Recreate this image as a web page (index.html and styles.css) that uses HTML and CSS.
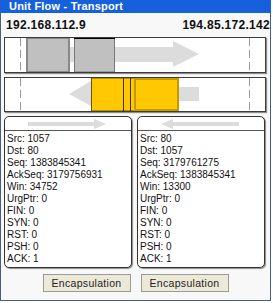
FILE: index.html
```html
<!DOCTYPE html>
<html lang="en">
<head>
    <meta charset="UTF-8">
    <title>Unit Flow - Transport</title>
    <link rel="stylesheet" href="styles.css">
</head>
<body>
    <div class="window">
        <div class="titlebar">Unit Flow - Transport</div>

        <div class="hosts">
            <span>192.168.112.9</span>
            <span>194.85.172.142</span>
        </div>

        <!-- outgoing segments -->
        <div class="lane">
            <svg width="260" height="34" viewBox="0 0 260 34">
                <line class="mark" x1="15.5" y1="0" x2="15.5" y2="34"/>
                <line class="mark" x1="244.5" y1="0" x2="244.5" y2="34"/>
                <polygon class="flow" points="64,9 168,9 168,3 194,16 168,29 168,24 64,24"/>
                <rect x="22" y="0" width="42" height="34" fill="#c0c0c0" stroke="#888" stroke-width="2"/>
                <rect x="69.5" y="0" width="40" height="34" fill="#c0c0c0" stroke="#777" stroke-width="1"/>
                <line x1="69" y1="0.5" x2="110" y2="0.5" stroke="#000"/>
            </svg>
        </div>

        <!-- incoming segments -->
        <div class="lane lane-in">
            <svg width="260" height="33" viewBox="0 0 260 33">
                <line class="mark" x1="15.5" y1="0" x2="15.5" y2="33"/>
                <line class="mark" x1="244.5" y1="0" x2="244.5" y2="33"/>
                <polygon class="flow" points="194,9 86,9 86,3 64,16 86,28 86,23 194,23"/>
                <rect x="86.5" y="0" width="43" height="33" fill="#ffc800" stroke="#6b5200" stroke-width="1"/>
                <line x1="118.5" y1="0" x2="118.5" y2="33" stroke="#3a2e00"/>
                <line x1="125.5" y1="0" x2="125.5" y2="33" stroke="#3a2e00"/>
                <rect x="130" y="1" width="43" height="31" fill="#ffc800" stroke="#c49a00" stroke-width="2"/>
            </svg>
        </div>

        <div class="panels">
            <div class="panel">
                <div class="panel-head">
                    <svg width="80" height="10" viewBox="0 0 80 10">
                        <polygon class="flow" points="0,3 66,3 66,0 78,5 66,10 66,7 0,7"/>
                    </svg>
                </div>
                <ul class="fields">
                    <li>Src: 1057</li>
                    <li>Dst: 80</li>
                    <li>Seq: 1383845341</li>
                    <li>AckSeq: 3179756931</li>
                    <li>Win: 34752</li>
                    <li>UrgPtr: 0</li>
                    <li>FIN: 0</li>
                    <li>SYN: 0</li>
                    <li>RST: 0</li>
                    <li>PSH: 0</li>
                    <li>ACK: 1</li>
                </ul>
            </div>
            <div class="panel">
                <div class="panel-head">
                    <svg width="80" height="10" viewBox="0 0 80 10">
                        <polygon class="flow" points="78,3 12,3 12,0 0,5 12,10 12,7 78,7"/>
                    </svg>
                </div>
                <ul class="fields">
                    <li>Src: 80</li>
                    <li>Dst: 1057</li>
                    <li>Seq: 3179761275</li>
                    <li>AckSeq: 1383845341</li>
                    <li>Win: 13300</li>
                    <li>UrgPtr: 0</li>
                    <li>FIN: 0</li>
                    <li>SYN: 0</li>
                    <li>RST: 0</li>
                    <li>PSH: 0</li>
                    <li>ACK: 1</li>
                </ul>
            </div>
        </div>

        <div class="actions">
            <button>Encapsulation</button>
            <button>Encapsulation</button>
        </div>
    </div>
</body>
</html>
```

FILE: styles.css
```css
body {
    margin: 0;
    padding: 0;
    background-color: #fff;
    font-family: "Liberation Sans", Arial, sans-serif;
}

.window {
    width: 269px;
    height: 300px;
    border: 1px solid #4c5a86;
    border-top: none;
    background-color: #f8f8f8;
    display: flex;
    flex-direction: column;
}

.titlebar {
    height: 13px;
    margin: 0 -1px;
    padding-left: 9px;
    background-color: #1660dc;
    color: #fff;
    font-size: 11px;
    font-weight: bold;
    line-height: 13px;
    letter-spacing: 0.2px;
}

.hosts {
    display: flex;
    justify-content: space-between;
    padding: 5px 0 0 5px;
    height: 14px;
    font-size: 12px;
    font-weight: bold;
    line-height: 14px;
    letter-spacing: 0.3px;
    color: #111;
}

.lane {
    width: 260px;
    height: 34px;
    margin: 5px 0 0 3px;
    border: 1px solid #3c3c3c;
    background-color: #fff;
    box-shadow: 1px 1px 1px #8c8c8c;
}

.lane svg {
    display: block;
}

.lane-in {
    height: 33px;
    margin-top: 4px;
}

.mark {
    stroke: #9a9a9a;
    stroke-width: 1;
    stroke-dasharray: 8 4;
}

.flow {
    fill: #dcdcdc;
}

.panels {
    display: flex;
    gap: 5px;
    margin: 4px 0 0 3px;
}

.panel {
    width: 126px;
    height: 150px;
    border: 1px solid #333;
    border-radius: 5px;
    background-color: #fff;
    box-shadow: 1px 1px 1px #8c8c8c;
}

.panel-head {
    height: 13px;
    border-bottom: 1px solid #555;
    display: flex;
    justify-content: center;
    align-items: center;
}

.fields {
    list-style: none;
    margin: 0;
    padding: 2px 0 0 2px;
    font-size: 10px;
    line-height: 12px;
    color: #111;
}

.actions {
    display: flex;
    justify-content: center;
    gap: 10px;
    margin-top: 6px;
}

button {
    width: 88px;
    height: 18px;
    padding: 0;
    border: 1px solid #9a9a9a;
    border-radius: 0;
    background-color: #ece9d8;
    color: #222;
    font-family: "Liberation Sans", Arial, sans-serif;
    font-size: 10.5px;
    letter-spacing: 0.3px;
}
```
